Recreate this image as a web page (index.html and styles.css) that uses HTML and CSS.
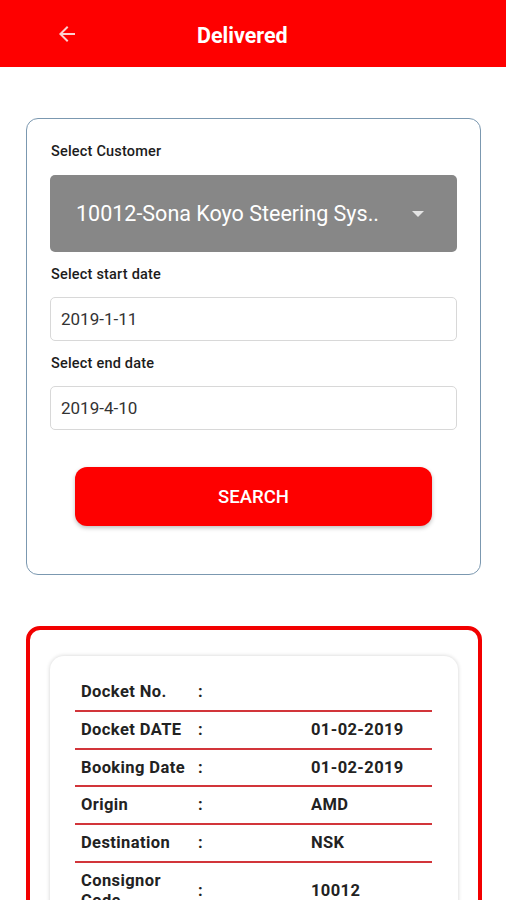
FILE: index.html
```html
<!DOCTYPE html>
<html lang="en">
<head>
    <meta charset="UTF-8">
    <meta name="viewport" content="width=device-width, initial-scale=1.0">
    <title>Delivered</title>
    <link rel="stylesheet" href="styles.css">
</head>
<body>
    <div class="toolbar">
        <button class="back-btn" aria-label="Back">
            <svg viewBox="0 0 24 24" width="24" height="24"><path d="M20 11H7.83l5.59-5.59L12 4l-8 8 8 8 1.41-1.41L7.83 13H20v-2z"/></svg>
        </button>
        <h1>Delivered</h1>
    </div>

    <div class="filter-card">
        <label class="field-label">Select Customer</label>
        <div class="customer-select">
            <span>10012-Sona Koyo Steering Sys..</span>
            <span class="caret"></span>
        </div>

        <label class="field-label">Select start date</label>
        <div class="date-input">2019-1-11</div>

        <label class="field-label">Select end date</label>
        <div class="date-input">2019-4-10</div>

        <button class="search-btn">SEARCH</button>
    </div>

    <div class="result-card">
        <div class="docket">
            <div class="docket-row">
                <span class="key">Docket No.</span>
                <span class="colon">:</span>
                <span class="val"></span>
            </div>
            <div class="docket-row">
                <span class="key">Docket DATE</span>
                <span class="colon">:</span>
                <span class="val">01-02-2019</span>
            </div>
            <div class="docket-row">
                <span class="key">Booking Date</span>
                <span class="colon">:</span>
                <span class="val">01-02-2019</span>
            </div>
            <div class="docket-row">
                <span class="key">Origin</span>
                <span class="colon">:</span>
                <span class="val">AMD</span>
            </div>
            <div class="docket-row">
                <span class="key">Destination</span>
                <span class="colon">:</span>
                <span class="val">NSK</span>
            </div>
            <div class="docket-row">
                <span class="key">Consignor Code</span>
                <span class="colon">:</span>
                <span class="val">10012</span>
            </div>
            <div class="docket-row">
                <span class="key">Consignee</span>
                <span class="colon">:</span>
                <span class="val"></span>
            </div>
        </div>
    </div>
</body>
</html>
```

FILE: styles.css
```css
* {
    margin: 0;
    padding: 0;
    box-sizing: border-box;
    font-family: Roboto, 'Liberation Sans', sans-serif;
}

body {
    background-color: #fff;
    color: #222;
}

.toolbar {
    height: 67px;
    background-color: #fe0000;
    display: flex;
    align-items: center;
    padding-left: 55px;
}

.back-btn {
    width: 24px;
    height: 24px;
    border: none;
    background: none;
    display: flex;
}

.back-btn svg {
    fill: #fbd0d0;
}

.toolbar h1 {
    margin-left: 118px;
    color: #fff;
    font-size: 21.5px;
    font-weight: 700;
    margin-top: 3px;
}

.filter-card {
    margin: 51px 25px 0 26px;
    border: 1.5px solid #7b98b0;
    border-radius: 12px;
    padding: 25px 23px 48px 23px;
    display: flex;
    flex-direction: column;
}

.field-label {
    font-size: 14.5px;
    font-weight: 500;
    letter-spacing: 0.2px;
    color: #1c1c1c;
    line-height: 16px;
    margin-left: 1px;
}

.customer-select {
    margin: 15px 0 15px;
    height: 77px;
    background-color: #878787;
    border-radius: 5px;
    display: flex;
    align-items: center;
    justify-content: space-between;
    padding: 0 33px 0 26px;
    color: #fff;
    font-size: 21.5px;
}

.caret {
    width: 0;
    height: 0;
    border-left: 6px solid transparent;
    border-right: 6px solid transparent;
    border-top: 6px solid #e4e4e4;
}

.date-input {
    margin: 14px 0 15px;
    height: 44px;
    border: 1px solid #d8d8d8;
    border-radius: 5px;
    display: flex;
    align-items: center;
    padding-left: 10px;
    font-size: 17px;
    color: #333;
}

.search-btn {
    margin: 22px auto 0;
    width: 357px;
    height: 59px;
    border: none;
    border-radius: 12px;
    background-color: #fe0000;
    color: #fff;
    font-size: 18.5px;
    font-weight: 500;
    box-shadow: 0 2px 4px rgba(0, 0, 0, 0.25);
}

.result-card {
    margin: 51px 24px 0 26px;
    border: 4px solid #f20000;
    border-radius: 14px;
    padding: 26px 20px 20px 20px;
}

.docket {
    border-radius: 14px;
    box-shadow: 0 0 4px rgba(0, 0, 0, 0.18);
    padding: 18px 26px 20px 25px;
}

.docket-row {
    display: flex;
    align-items: center;
    padding: 8px 0 7.75px;
    border-bottom: 2px solid #d2353a;
    font-size: 16.5px;
    font-weight: 700;
    letter-spacing: 0.4px;
    line-height: 20px;
    color: #222;
}

.docket-row .key {
    width: 117px;
    padding-left: 6px;
}

.docket-row .colon {
    width: 119px;
    padding-left: 6px;
}

.docket-row .val {
    flex: 1;
}
```
